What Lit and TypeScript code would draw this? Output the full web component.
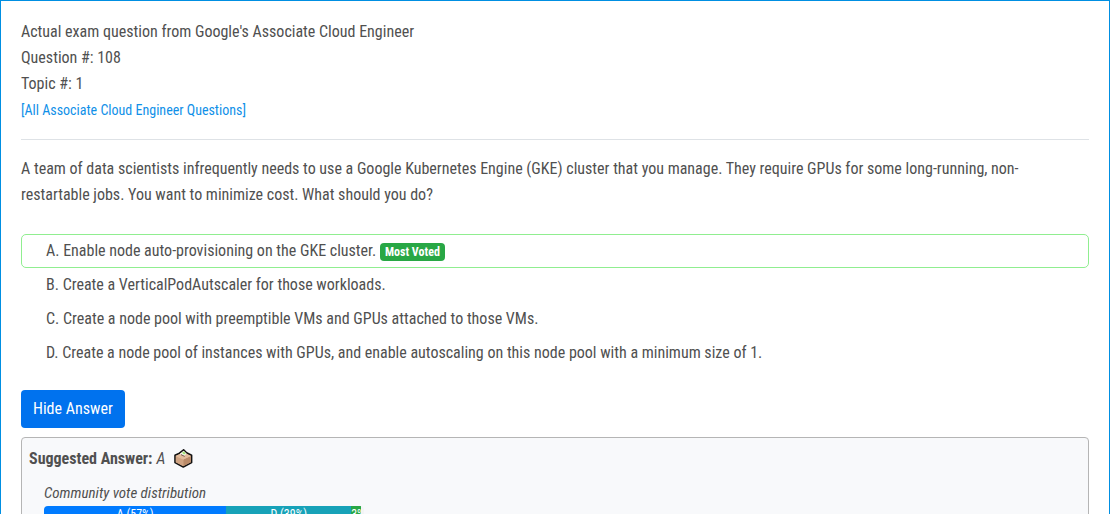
import { LitElement, html, css, svg } from "lit";
import { customElement, state } from "lit/decorators.js";
import { classMap } from "lit/directives/class-map.js";
import { styleMap } from "lit/directives/style-map.js";

interface Choice {
  letter: string;
  text: string;
  mostVoted?: boolean;
}

interface Vote {
  letter: string;
  share: number;
  label: string;
  tone: string;
}

const CHOICES: Choice[] = [
  { letter: "A", text: "Enable node auto-provisioning on the GKE cluster.", mostVoted: true },
  { letter: "B", text: "Create a VerticalPodAutscaler for those workloads." },
  { letter: "C", text: "Create a node pool with preemptible VMs and GPUs attached to those VMs." },
  {
    letter: "D",
    text: "Create a node pool of instances with GPUs, and enable autoscaling on this node pool with a minimum size of 1.",
  },
];

const VOTES: Vote[] = [
  { letter: "A", share: 57, label: "A (57%)", tone: "primary" },
  { letter: "D", share: 39, label: "D (39%)", tone: "info" },
  { letter: "other", share: 3, label: "3%", tone: "success" },
];

const ballotBox = svg`
  <path d="M1 6.2 L5.4 4.2 L9.6 0.8 L12.6 3.8 L17.6 6.2 V13.6 L9.3 18 L1 13.6 Z" fill="#e3bd9c" stroke="#111" stroke-width="1.6" stroke-linejoin="round"/>
  <path d="M1.8 7 L9.3 10.6 V17.2 L1.8 13.2 Z" fill="#cfa382"/>
  <path d="M9.3 10.6 L16.8 7 V13.2 L9.3 17.2 Z" fill="#b98a68"/>
  <path d="M1.8 6.9 L9.3 3.6 L16.8 6.9 L9.3 10.6 Z" fill="#e2bb9b"/>
  <path d="M5.8 5 L9.6 1.8 L12.6 4.8 L9.6 7.2 Z" fill="#f4f8f0"/>
  <path d="M8 3.8 L10 2.6 L11.6 4.6 L10 5.6 Z" fill="#9ee06c"/>
  <path d="M7 5.6 L10.6 7.4" stroke="#6b5240" stroke-width="1"/>
`;

@customElement("app-root")
export class AppRoot extends LitElement {
  static styles = css`
    :host {
      display: block;
      height: 100vh;
      overflow: hidden;
      font-family: "Roboto Condensed", "Liberation Sans Narrow", sans-serif;
      font-size: 16px;
      line-height: 26px;
      color: #505050;
      background: #fff;
    }
    * {
      box-sizing: border-box;
    }
    .card {
      min-height: calc(100vh + 60px);
      padding: 18px 20px;
      border: 1px solid #008fe2;
    }
    .header {
      padding-bottom: 16px;
      border-bottom: 1px solid #dee2e6;
    }
    .all {
      font-size: 14px;
      color: #1090e8;
      text-decoration: none;
    }
    .question {
      margin: 16px 0 26px;
      padding-right: 8px;
    }
    .choices {
      margin: 0;
      padding: 0;
      list-style: none;
    }
    .choice {
      padding: 3px 24px;
      border: 1px solid transparent;
      border-radius: 5px;
    }
    .voted {
      border-color: #90ee90;
    }
    .badge {
      display: inline-block;
      padding: 3px 5px;
      border-radius: 4px;
      background: #28a745;
      color: #fff;
      font-size: 12px;
      font-weight: 700;
      line-height: 12px;
      vertical-align: baseline;
    }
    .toggle {
      display: block;
      margin: 20px 0 9px;
      padding: 6px 12px;
      border: 0;
      border-radius: 4px;
      background: #0072ee;
      color: #fff;
      font: inherit;
      line-height: 26px;
      cursor: pointer;
    }
    .answer {
      min-height: 140px;
      padding: 8px 7px;
      border: 1px solid #b5b5b5;
      border-radius: 4px;
      background: #f8f9fb;
    }
    .suggested {
      display: flex;
      align-items: center;
      gap: 4px;
    }
    .ballot {
      margin-left: 5px;
    }
    .votes {
      width: 320px;
      max-width: 100%;
      margin: 8px 15px 0;
    }
    .caption {
      font-size: 15px;
      line-height: 26px;
      font-style: italic;
    }
    .bars {
      display: flex;
      height: 16px;
      overflow: hidden;
      border-radius: 4px;
      background: #f3f4f6;
    }
    .bar {
      overflow: hidden;
      color: #fff;
      font-size: 12px;
      line-height: 16px;
      text-align: center;
      white-space: nowrap;
    }
    .primary {
      background: #007bff;
    }
    .info {
      background: #17a2b8;
    }
    .success {
      background: #28a745;
    }
  `;

  @state() private shown = true;

  private toggle() {
    this.shown = !this.shown;
  }

  private renderChoice(c: Choice) {
    return html`<li class=${classMap({ choice: true, voted: !!c.mostVoted })}>
      ${c.letter}. ${c.text} ${c.mostVoted ? html`<span class="badge">Most Voted</span>` : ""}
    </li>`;
  }

  private renderAnswer() {
    return html`<section class="answer">
      <div class="suggested">
        <strong>Suggested Answer:</strong><em>A</em>
        <svg class="ballot" width="19" height="20" viewBox="0 0 19 20" aria-hidden="true">${ballotBox}</svg>
      </div>
      <div class="votes">
        <div class="caption">Community vote distribution</div>
        <div class="bars">
          ${VOTES.map(
            (v) => html`<div class="bar ${v.tone}" style=${styleMap({ width: `${v.share}%` })}>${v.label}</div>`
          )}
        </div>
      </div>
    </section>`;
  }

  render() {
    return html`<main class="card">
      <header class="header">
        <div>Actual exam question from Google's Associate Cloud Engineer</div>
        <div>Question #: 108</div>
        <div>Topic #: 1</div>
        <div><a class="all" href="#all">[All Associate Cloud Engineer Questions]</a></div>
      </header>
      <p class="question">
        A team of data scientists infrequently needs to use a Google Kubernetes Engine (GKE) cluster that you manage.
        They require GPUs for some long-running, non-restartable jobs. You want to minimize cost. What should you do?
      </p>
      <ul class="choices">
        ${CHOICES.map((c) => this.renderChoice(c))}
      </ul>
      <button class="toggle" type="button" @click=${this.toggle}>${this.shown ? "Hide Answer" : "Reveal Answer"}</button>
      ${this.shown ? this.renderAnswer() : ""}
    </main>`;
  }
}
